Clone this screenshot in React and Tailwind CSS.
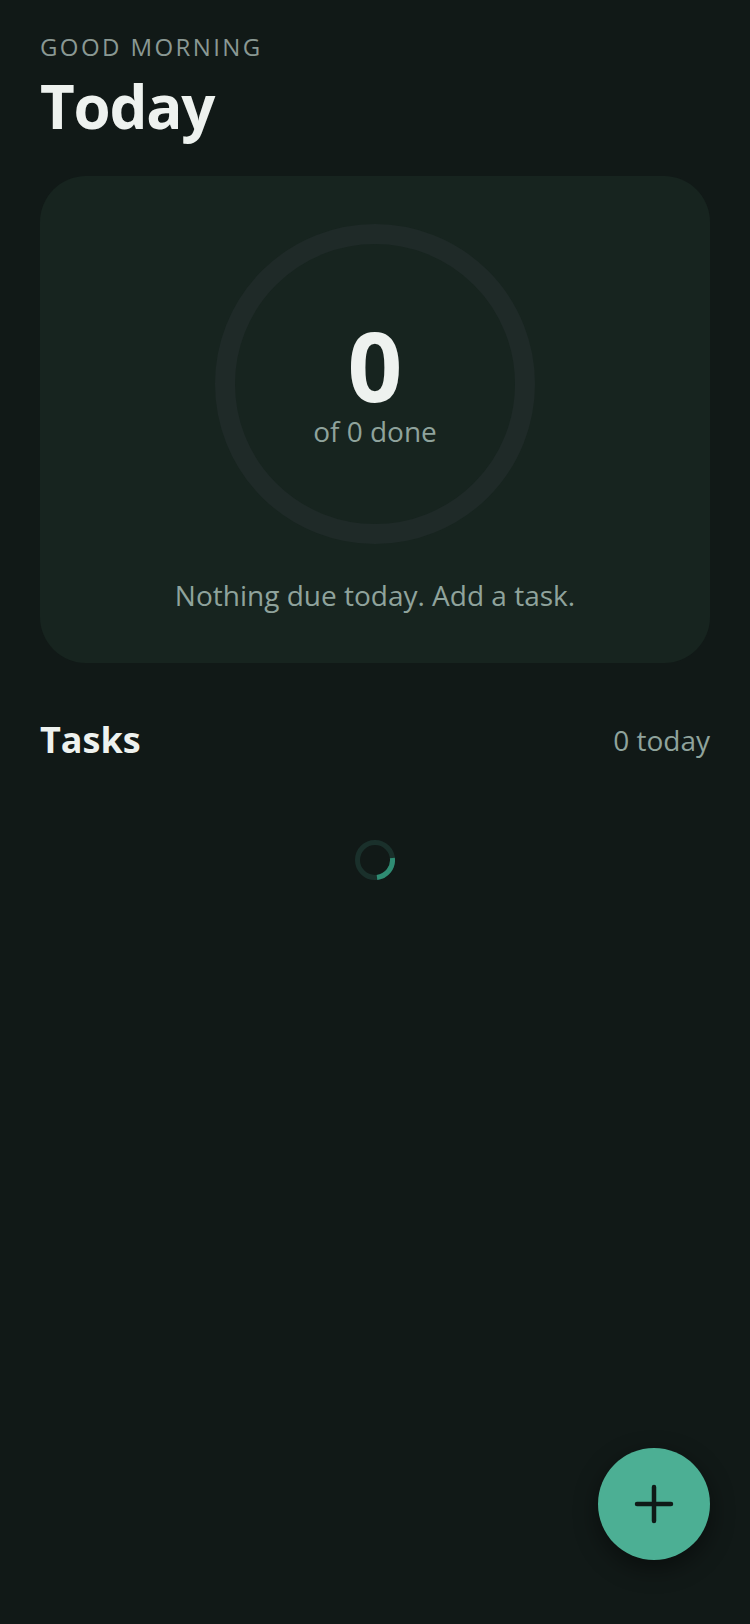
import React from 'react';

const Ring = () => (
  <svg width="320" height="320" viewBox="0 0 320 320" className="absolute inset-0">
    <circle cx="160" cy="160" r="150" fill="none" stroke="#1f2a28" strokeWidth="20" />
  </svg>
);

const Spinner = () => (
  <svg width="40" height="40" viewBox="0 0 40 40">
    <circle cx="20" cy="20" r="17.5" fill="none" stroke="#1a302b" strokeWidth="5" />
    <path d="M37.4 18 A17.5 17.5 0 0 1 22 37.4" fill="none" stroke="#2f8c73" strokeWidth="5" />
  </svg>
);

const App = () => {
  return (
    <div
      className="relative min-h-[1624px] bg-[#111917] px-10 pt-[31px]"
      style={{ fontFamily: '"Open Sans", "Noto Sans", sans-serif' }}
    >
      <div className="text-[24px] leading-[32px] tracking-[0.1em] text-[#8a9893]">GOOD MORNING</div>
      <h1 className="mt-[7px] text-[60px] leading-[72px] font-bold tracking-[-0.02em] text-[#eef2ef]">Today</h1>

      <div className="mt-[34px] rounded-[46px] bg-[#17241f] pt-12 pb-12 flex flex-col items-center">
        <div className="relative w-[320px] h-[320px] flex flex-col items-center justify-center">
          <Ring />
          <div className="relative text-[96px] leading-[90px] font-bold text-[#eef2ef]">0</div>
          <div className="relative mt-[4px] text-[28px] leading-[34px] text-[#8fa39c]">of 0 done</div>
        </div>
        <p className="mt-[31px] text-[28px] leading-[40px] text-[#8fa39c]">Nothing due today. Add a task.</p>
      </div>

      <div className="mt-[53px] flex items-center justify-between">
        <h2 className="text-[36px] leading-[48px] font-bold text-[#eef2ef]">Tasks</h2>
        <span className="text-[28px] leading-[40px] text-[#8fa39c]">0 today</span>
      </div>

      <div className="mt-[76px] flex justify-center">
        <Spinner />
      </div>

      <button className="absolute right-10 top-[1448px] w-[112px] h-[112px] rounded-full bg-[#4caf94] flex items-center justify-center shadow-[0_8px_24px_rgba(0,0,0,0.45)]">
        <svg width="40" height="40" viewBox="0 0 40 40">
          <path d="M20 3v34M3 20h34" stroke="#0f1a17" strokeWidth="4.5" strokeLinecap="round" />
        </svg>
      </button>
    </div>
  );
};

export default App;
